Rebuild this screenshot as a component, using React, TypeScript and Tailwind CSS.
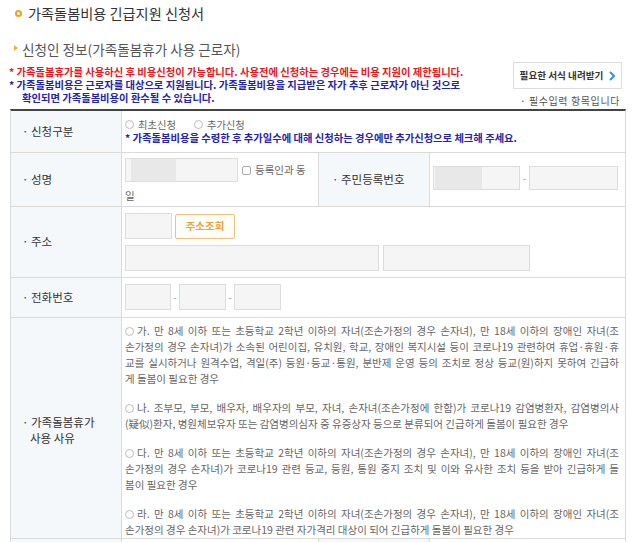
import React from "react";

function Radio() {
  return <span className="inline-block w-[9px] h-[9px] rounded-full border border-[#bbb] bg-white shrink-0" />;
}

function Input({ w, h = "h-[26px]", patch }: { w: string; h?: string; patch?: string }) {
  return (
    <div className={`${w} ${h} bg-[#f5f5f5] border border-[#dcdcdc] shrink-0 flex`}>
      {patch ? <div className={`${patch} h-full bg-[#e8e8e8]`} /> : null}
    </div>
  );
}

function Label({ children, className = "" }: { children: React.ReactNode; className?: string }) {
  return (
    <div className={`w-[111px] shrink-0 bg-[#f5f8fb] border-r border-[#dadada] flex items-center pl-[11px] text-[11.5px] text-[#333] ${className}`}>
      {children}
    </div>
  );
}

const J = "[text-align-last:justify] text-justify whitespace-nowrap";

function Para({ lines, className = "" }: { lines: string[]; className?: string }) {
  return (
    <div className={className}>
      {lines.map((l, i) => {
        const last = i === lines.length - 1;
        if (i === 0) {
          return (
            <div key={i} className="flex items-center h-[16px]">
              <Radio />
              <span className={`ml-[3px] flex-1 ${last ? "" : J}`}>{l}</span>
            </div>
          );
        }
        return (
          <div key={i} className={`h-[16px] leading-[16px] ${last ? "" : J}`}>
            {l}
          </div>
        );
      })}
    </div>
  );
}

export default function App() {
  return (
    <div className="w-[640px] h-[542px] overflow-hidden bg-white text-[#333] font-['Noto_Sans_CJK_KR','Noto_Sans',sans-serif]">
      {/* title */}
      <div className="flex items-center h-[26px] pl-[15px]">
        <span className="w-[7px] h-[7px] rounded-full border-2 border-[#f0a020] mr-[6px]" />
        <span className="text-[14.2px] leading-none text-[#333]">가족돌봄비용 긴급지원 신청서</span>
      </div>
      {/* subtitle */}
      <div className="flex items-center h-[20px] mt-[14px] pl-[14px]">
        <span className="w-0 h-0 border-y-[3px] border-y-transparent border-l-[4px] border-l-[#f0b040] -mt-[4px]" />
        <span className="ml-[4px] text-[13.6px] leading-none text-[#555]">신청인 정보(가족돌봄휴가 사용 근로자)</span>
      </div>
      {/* notes + button */}
      <div className="flex justify-between">
        <div className="pt-[4.5px] pl-[9px] text-[10.3px] font-bold leading-[13px]">
          <div className="text-[#e4181e]">* 가족돌봄휴가를 사용하신 후 비용신청이 가능합니다. 사용전에 신청하는 경우에는 비용 지원이 제한됩니다.</div>
          <div className="text-[#2424a8]">* 가족돌봄비용은 근로자를 대상으로 지원됩니다. 가족돌봄비용을 지급받은 자가 추후 근로자가 아닌 것으로</div>
          <div className="text-[#2424a8] pl-[13px]">확인되면 가족돌봄비용이 환수될 수 있습니다.</div>
        </div>
        <div className="pr-[18px] flex flex-col items-end">
          <div className="mt-[2px] w-[109px] h-[27px] border border-[#dddddd] bg-white flex items-center justify-center gap-[6px]">
            <span className="text-[9.6px] font-bold text-[#333]">필요한 서식 내려받기</span>
            <svg width="6" height="10" viewBox="0 0 6 10">
              <path d="M1 1 L5 5 L1 9" fill="none" stroke="#3a8ee6" strokeWidth="2" />
            </svg>
          </div>
          <div className="mt-[6px] h-[12px] leading-[12px] text-[10px] text-[#555] tracking-[0.6px] pr-[2px]">· 필수입력 항목입니다</div>
        </div>
      </div>
      {/* table */}
      <div className="mt-[2px] ml-[10px] w-[616px] border-t-2 border-[#444] border-x border-x-[#dadada]">
        {/* row 1 */}
        <div className="flex h-[42px] border-b border-[#dadada]">
          <Label>· 신청구분</Label>
          <div className="pl-[3px] pt-[6.5px] text-[10.3px]">
            <div className="flex items-center h-[13px] leading-[13px] text-[#666]">
              <Radio />
              <span className="ml-[4px] mr-[18px]">최초신청</span>
              <Radio />
              <span className="ml-[4px]">추가신청</span>
            </div>
            <div className="h-[13px] leading-[13px] font-bold text-[#2424a8]">
              * 가족돌봄비용을 수령한 후 추가일수에 대해 신청하는 경우에만 추가신청으로 체크해 주세요.
            </div>
          </div>
        </div>
        {/* row 2 */}
        <div className="flex h-[54px] border-b border-[#dadada]">
          <Label>· 성명</Label>
          <div className="w-[197px] shrink-0 border-r border-[#dadada] pl-[3px] pt-[5px] text-[10.5px] text-[#666]">
            <div className="flex items-center">
              <Input w="w-[113px]" h="h-[24px]" patch="w-[45px] ml-[5px]" />
              <span className="ml-[4px] inline-block w-[9px] h-[9px] rounded-[2px] border border-[#aaa] bg-white" />
              <span className="ml-[4px]">등록인과 동</span>
            </div>
            <div className="mt-[6.5px] h-[13px] leading-[13px]">일</div>
          </div>
          <Label className="w-[110px] pl-[13px]">· 주민등록번호</Label>
          <div className="flex-1 pl-[3px] pt-[13px] flex items-start">
            <Input w="w-[87px]" h="h-[24px]" patch="w-[47px] ml-[1px]" />
            <span className="w-[9px] text-center text-[10px] leading-[24px] text-[#999]">-</span>
            <Input w="w-[89px]" h="h-[24px]" />
          </div>
        </div>
        {/* row 3 */}
        <div className="flex h-[71px] border-b border-[#dadada]">
          <Label>· 주소</Label>
          <div className="pl-[3px] pt-[6px]">
            <div className="flex items-center">
              <Input w="w-[47px]" />
              <div className="ml-[3px] w-[60px] h-[25px] border border-[#ebc27a] bg-[#fffdf7] rounded-[2px] flex items-center justify-center text-[10.5px] font-bold text-[#e3a33a]">
                주소조회
              </div>
            </div>
            <div className="flex mt-[6px]">
              <Input w="w-[254px]" />
              <div className="w-[4px]" />
              <Input w="w-[147px]" />
            </div>
          </div>
        </div>
        {/* row 4 */}
        <div className="flex h-[40px] border-b border-[#dadada]">
          <Label>· 전화번호</Label>
          <div className="pl-[3px] pt-[6px] flex items-start">
            <Input w="w-[46px]" />
            <span className="w-[8px] text-center text-[10px] leading-[26px] text-[#999]">-</span>
            <Input w="w-[47px]" />
            <span className="w-[8px] text-center text-[10px] leading-[26px] text-[#999]">-</span>
            <Input w="w-[47px]" />
          </div>
        </div>
        {/* row 5 */}
        <div className="flex h-[221px] border-b border-[#dadada]">
          <Label className="pt-[3px]">
            <div className="leading-[16px]">
              <div>· 가족돌봄휴가</div>
              <div className="pl-[8px]">사용 사유</div>
            </div>
          </Label>
          <div className="flex-1 pl-[3px] pr-[6px] pt-[5px] text-[10.5px] text-[#666]">
            <Para
              lines={[
                "가. 만 8세 이하 또는 초등학교 2학년 이하의 자녀(조손가정의 경우 손자녀), 만 18세 이하의 장애인 자녀(조",
                "손가정의 경우 손자녀)가 소속된 어린이집, 유치원, 학교, 장애인 복지시설 등이 코로나19 관련하여 휴업·휴원·휴",
                "교를 실시하거나 원격수업, 격일(주) 등원·등교·통원, 분반제 운영 등의 조치로 정상 등교(원)하지 못하여 긴급하",
                "게 돌봄이 필요한 경우",
              ]}
            />
            <Para
              className="mt-[13px]"
              lines={[
                "나. 조부모, 부모, 배우자, 배우자의 부모, 자녀, 손자녀(조손가정에 한함)가 코로나19 감염병환자, 감염병의사",
                "(疑似)환자, 병원체보유자 또는 감염병의심자 중 유증상자 등으로 분류되어 긴급하게 돌봄이 필요한 경우",
              ]}
            />
            <Para
              className="mt-[13px]"
              lines={[
                "다. 만 8세 이하 또는 초등학교 2학년 이하의 자녀(조손가정의 경우 손자녀), 만 18세 이하의 장애인 자녀(조",
                "손가정의 경우 손자녀)가 코로나19 관련 등교, 등원, 통원 중지 조치 및 이와 유사한 조치 등을 받아 긴급하게 돌",
                "봄이 필요한 경우",
              ]}
            />
            <Para
              className="mt-[13px]"
              lines={[
                "라. 만 8세 이하 또는 초등학교 2학년 이하의 자녀(조손가정의 경우 손자녀), 만 18세 이하의 장애인 자녀(조",
                "손가정의 경우 손자녀)가 코로나19 관련 자가격리 대상이 되어 긴급하게 돌봄이 필요한 경우",
              ]}
            />
          </div>
        </div>
        {/* row 6 (partially visible) */}
        <div className="flex h-[40px] border-b border-[#dadada]">
          <Label> </Label>
          <div className="w-[197px] shrink-0 border-r border-[#dadada]" />
          <Label className="w-[110px]"> </Label>
          <div className="flex-1" />
        </div>
      </div>
    </div>
  );
}
